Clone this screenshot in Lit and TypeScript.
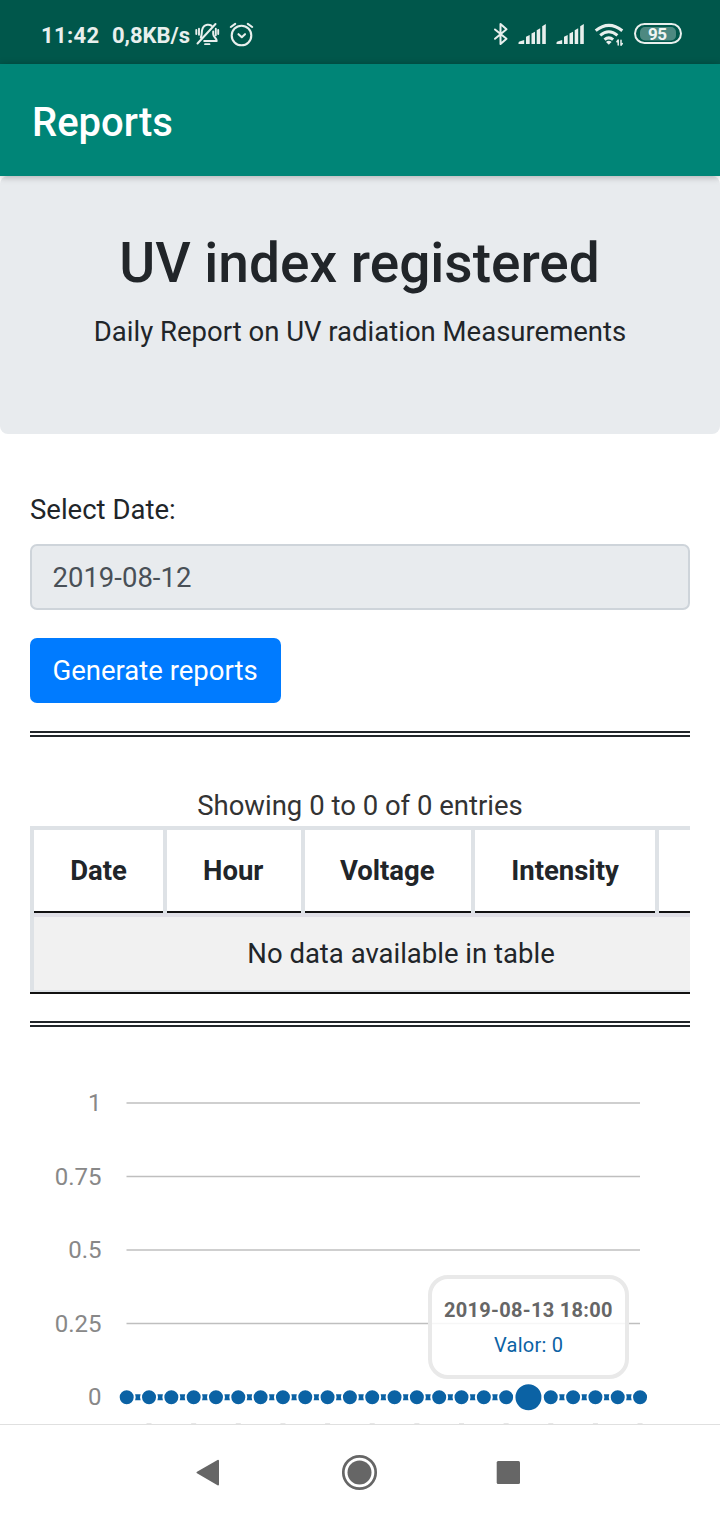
import { LitElement, html, svg, css } from "lit";
import { customElement } from "lit/decorators.js";

const HEADERS = ["Date", "Hour", "Voltage", "Intensity", ""];
const Y_TICKS = [
  { label: "1", y: 33 },
  { label: "0.75", y: 106.5 },
  { label: "0.5", y: 180 },
  { label: "0.25", y: 253.5 },
  { label: "0", y: 327 },
];
const POINTS = Array.from({ length: 24 }, (_, i) => 126.7 + i * 22.32);
const SELECTED = 18;

@customElement("status-bar")
class StatusBar extends LitElement {
  static styles = css`
    :host { display: block; height: 64px; background: #00574b; }
    svg { display: block; }
    .label { font: 700 22px Roboto, sans-serif; fill: #e8efed; }
    .battery { font: 700 17px Roboto, sans-serif; fill: #f1f5f4; }
    .line { fill: none; stroke: #e8efed; stroke-width: 2; stroke-linecap: round; stroke-linejoin: round; }
    .solid { fill: #e8efed; }
  `;
  signal(x: number) {
    return svg`<g class="solid" transform="translate(${x} 0)">
      <path d="M0 44v-1q0-1 1-1.400L5.700 40v4z"/>
      <path d="M7.500 44v-7.200l3.700-1.900V44z"/>
      <path d="M13 44V33.600l3.500-1.900V44z"/>
      <path d="M18.200 44V30.200l3.500-1.900V44z"/>
      <path d="M23.700 44V26.300l3.600-2.300V44z"/>
    </g>`;
  }
  render() {
    return html`<svg width="720" height="64" viewBox="0 0 720 64">
      <text class="label" x="41" y="43" textLength="58">11:42</text>
      <text class="label" x="112" y="43" textLength="78">0,8KB/s</text>
      <g class="line">
        <path stroke-width="2" d="M197.500 43.500 215.500 24M200.800 37.500c1.100-2 .8-4.500 1.200-7 .6-3.200 2.600-5.200 5.200-5.700 1.500-.3 3 .1 4.200.9M213.200 31.500v2.500c0 3 3.500 4 3.500 7h-12.500"/>
        <path stroke-width="1.900" d="M196.300 30v4M215.800 28.800v6.400M218.200 30v4M199 28.800v6"/>
        <path stroke-width="1.800" d="M205 44.200h4.500"/>
        <circle cx="241.500" cy="35.500" r="9.800" stroke-width="2.100"/>
        <path stroke-width="2.100" d="m238.500 34.200 3.300 3 3.200-3M230.800 27l4.400-3.200M252.200 27l-4.400-3.200"/>
        <path d="m495 29.500 11.500 9.300-6 5.200V24l6 5.300-11.500 9.500"/>
      </g>
      ${this.signal(518.5)}${this.signal(556.5)}
      <g class="line">
        <path stroke-width="3" stroke-linecap="butt" d="M595.700 30.700q13.100-10.600 26.600 0M600.200 35.300q8.600-7.200 17.200 0M604.500 39.700q4.300-3.700 8.600 0"/>
        <path stroke-width="1.500" d="M618.200 45v-5l-1.300 1.700M621 40.200v5.100l1.300-1.700"/>
        <rect x="635" y="24" width="46" height="19" rx="9.500"/>
      </g>
      <path class="solid" d="M606 42q2.800-2.400 5.600 0L608.800 44.700z"/>
      <rect x="640" y="27" width="36" height="13.500" rx="5" fill="#4d8981"/>
      <text class="battery" x="648" y="39.700" textLength="19">95</text>
    </svg>`;
  }
}

@customElement("report-chart")
class ReportChart extends LitElement {
  static styles = css`
    :host { display: block; height: 354px; overflow: hidden; }
    svg { display: block; }
    .tick { font: 400 24px Roboto, sans-serif; fill: #888; text-anchor: end; }
    .grid { stroke: #bfbfbf; stroke-width: 1.300; }
    .series { stroke: #0b62a4; stroke-width: 6; }
    .dot { fill: #0b62a4; stroke: #fff; stroke-width: 2; }
    .tip { fill: #fff; fill-opacity: 0.85; stroke: #e9e9e9; stroke-width: 4; }
    .tip-title { font: 700 20px Roboto, sans-serif; fill: #666; }
    .tip-value { font: 400 20px Roboto, sans-serif; fill: #0b62a4; }
  `;
  render() {
    return html`<svg width="720" height="354" viewBox="0 0 720 354">
      ${Y_TICKS.map(
        (t) => svg`<text class="tick" x="101.600" y=${t.y + 8}>${t.label}</text>
          ${t.label === "0" ? "" : svg`<line class="grid" x1="126.500" x2="640" y1=${t.y} y2=${t.y} />`}`
      )}
      <line class="series" x1=${POINTS[0]} x2=${POINTS[23]} y1="327.300" y2="327.300" />
      ${POINTS.map((x, i) => svg`<circle class="dot" cx=${x} cy="327.300" r=${i === SELECTED ? 14 : 8} />`)}
      ${POINTS.filter((_, i) => i % 2 === 1).map((x) => svg`<rect x=${x - 2.5} y="353" width="5" height="1" fill="#e6e6e6" />`)}
      <rect class="tip" x="430" y="207" width="197" height="100" rx="18" />
      <text class="tip-title" x="444" y="247" textLength="168.500">2019-08-13 18:00</text>
      <text class="tip-value" x="494" y="282" textLength="69">Valor: 0</text>
    </svg>`;
  }
}

@customElement("app-root")
class AppRoot extends LitElement {
  static styles = css`
    :host {
      display: flex; flex-direction: column; width: 720px; height: 1520px; overflow: hidden;
      background: #fff; color: #212529; font: 400 27.500px/41px Roboto, sans-serif;
    }
    * { box-sizing: border-box; }
    .appbar {
      flex: none; height: 112px; background: #008577; color: #fff; padding: 3px 32px 0;
      font: 500 40px/112px Roboto, sans-serif; z-index: 1;
      box-shadow: 0 1px 7px rgba(0, 0, 0, 0.28);
    }
    .hero { flex: none; height: 258px; border-radius: 8px; background: #e8ebee; text-align: center; padding-top: 54px; }
    .hero h1 { margin: 0; padding-right: 1px; font-size: 55px; line-height: 66px; font-weight: 500; }
    .hero p { margin: 15px 0 0; }
    .body { flex: none; height: 636px; padding: 55px 30px 0; display: flex; flex-direction: column; align-items: stretch; }
    .date { height: 66px; margin-top: 14px; border: 2px solid #ced4da; border-radius: 7px; background: #e8ebee; color: #495057; padding-left: 20.500px; line-height: 63px; }
    .generate { align-self: flex-start; width: 251px; height: 65px; margin-top: 28px; padding: 0 1px 0 0; border: 0; border-radius: 7px; background: #007bff; color: #fff; font: inherit; }
    .rule { flex: none; height: 6px; border-top: 2px solid #212529; border-bottom: 2px solid #212529; }
    .first { margin-top: 28px; }
    .info { margin-top: 48px; height: 41px; text-align: center; color: #333; }
    .table { height: 168px; overflow: hidden; border-bottom: 2px solid #111; }
    .grid { width: 738px; border-left: 4px solid #dee2e6; }
    .head { display: grid; grid-template-columns: 133px 137.500px 170.500px 184px 109px; height: 87px; border-top: 4px solid #dee2e6; }
    .cell { height: 83px; border-right: 4px solid #dee2e6; text-align: center; font-weight: 700; line-height: 82px; background: linear-gradient(#111, #111) -1px 81px / calc(100% + 2px) 2px no-repeat border-box; background-clip: border-box; }
    .cell:nth-child(2), .cell:nth-child(3) { padding-right: 1px; }
    .empty { height: 79px; border-top: 4px solid #e0dfe6; border-bottom: 2px solid #dee2e6; background: #f1f1f1; text-align: center; line-height: 74px; }
    .last { margin-top: 27px; }
    .nav { flex: none; height: 96px; border-top: 1px solid #e0e0e0; background: #fff; }
    .nav svg { display: block; }
  `;
  render() {
    return html`
      <status-bar></status-bar>
      <header class="appbar">Reports</header>
      <section class="hero">
        <h1>UV index registered</h1>
        <p>Daily Report on UV radiation Measurements</p>
      </section>
      <main class="body">
        <label>Select Date:</label>
        <div class="date">2019-08-12</div>
        <button class="generate">Generate reports</button>
        <div class="rule first"></div>
        <div class="info">Showing 0 to 0 of 0 entries</div>
        <div class="table">
          <div class="grid">
            <div class="head">${HEADERS.map((h) => html`<div class="cell">${h}</div>`)}</div>
            <div class="empty">No data available in table</div>
          </div>
        </div>
        <div class="rule last"></div>
      </main>
      <report-chart></report-chart>
      <nav class="nav">
        <svg width="720" height="95" viewBox="0 0 720 95" fill="#666">
          <path d="M197.500 47.500 218 35.800V59.500z" stroke="#666" stroke-width="2" stroke-linejoin="round" />
          <circle cx="359.500" cy="47.500" r="12" />
          <circle cx="359.500" cy="47.500" r="16.200" fill="none" stroke="#666" stroke-width="2.700" />
          <rect x="496.700" y="36" width="23.300" height="23" rx="1.500" />
        </svg>
      </nav>
    `;
  }
}
